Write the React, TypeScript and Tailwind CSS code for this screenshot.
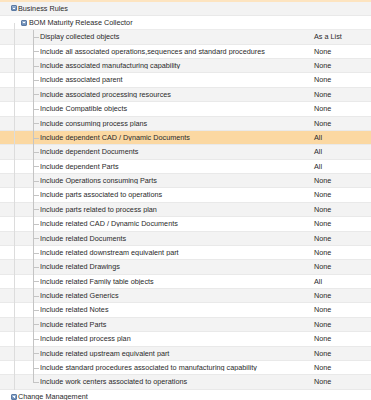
import React from "react";

type Item = { label: string; value: string; highlight?: boolean };

const items: Item[] = [
  { label: "Display collected objects", value: "As a List" },
  { label: "Include all associated operations,sequences and standard procedures", value: "None" },
  { label: "Include associated manufacturing capability", value: "None" },
  { label: "Include associated parent", value: "None" },
  { label: "Include associated processing resources", value: "None" },
  { label: "Include Compatible objects", value: "None" },
  { label: "Include consuming process plans", value: "None" },
  { label: "Include dependent CAD / Dynamic Documents", value: "All", highlight: true },
  { label: "Include dependent Documents", value: "All" },
  { label: "Include dependent Parts", value: "All" },
  { label: "Include Operations consuming Parts", value: "None" },
  { label: "Include parts associated to operations", value: "None" },
  { label: "Include parts related to process plan", value: "None" },
  { label: "Include related CAD / Dynamic Documents", value: "None" },
  { label: "Include related Documents", value: "None" },
  { label: "Include related downstream equivalent part", value: "None" },
  { label: "Include related Drawings", value: "None" },
  { label: "Include related Family table objects", value: "All" },
  { label: "Include related Generics", value: "None" },
  { label: "Include related Notes", value: "None" },
  { label: "Include related Parts", value: "None" },
  { label: "Include related process plan", value: "None" },
  { label: "Include related upstream equivalent part", value: "None" },
  { label: "Include standard procedures associated to manufacturing capability", value: "None" },
  { label: "Include work centers associated to operations", value: "None" },
];

function ToggleIcon({ plus }: { plus?: boolean }) {
  return (
    <span className="relative inline-block w-[6px] h-[6px] shrink-0 rounded-[1px] border border-[#5b7aa3] bg-gradient-to-b from-[#9db5d3] to-[#6a8bb6]">
      <span className="absolute left-[1px] top-[1.5px] w-[2px] h-[1px] bg-white" />
      {plus && <span className="absolute left-[1.5px] top-[1px] w-[1px] h-[2px] bg-white" />}
    </span>
  );
}

export default function App() {
  return (
    <div className="w-[371px] h-[400px] overflow-hidden bg-white font-['Liberation_Sans',Arial,sans-serif] text-[7.25px] text-[#2a2a2a] leading-none">
      <div className="h-[1.5px] bg-[#fde4c0]" />
      {/* Business Rules */}
      <div className="h-[14.375px] flex items-center bg-[#f3f3f3] border-b border-[#e9e9e9]">
        <div className="pl-[11px] flex items-center gap-[1px]">
          <ToggleIcon />
          <span>Business Rules</span>
        </div>
      </div>
      {/* BOM */}
      <div className="relative h-[14.375px] flex items-center bg-white border-b border-[#ececec]">
        <span className="absolute left-[14px] top-1/2 bottom-[-1px] w-[1px] bg-[#dcdcdc]" />
        <div className="pl-[21px] flex items-center gap-[2px]">
          <ToggleIcon />
          <span>BOM Maturity Release Collector</span>
        </div>
      </div>
      {items.map((it, i) => {
        const isLast = i === items.length - 1;
        const bg = it.highlight ? "bg-[#fbd8a2]" : i % 2 === 0 ? "bg-[#f3f3f3]" : "bg-white";
        return (
          <div key={i} className={`relative h-[14.375px] flex items-center border-b border-[#e9e9e9] ${bg}`}>
            <span className="absolute left-[14px] top-0 bottom-[-1px] w-[1px] bg-[#dcdcdc]" />
            <span
              className={`absolute left-[33px] top-0 w-[1px] bg-[#c4c4c4] ${isLast ? "h-1/2" : "bottom-[-1px]"}`}
            />
            <span className="absolute left-[33px] top-1/2 w-[6px] h-[1px] bg-[#c4c4c4]" />
            <span className="pl-[40px] flex-1 truncate">{it.label}</span>
            <span className="w-[57px] shrink-0">{it.value}</span>
          </div>
        );
      })}
      <div className="h-[14.375px] flex items-center bg-white">
        <div className="pl-[11px] flex items-center gap-[1px]">
          <ToggleIcon plus />
          <span>Change Management</span>
        </div>
      </div>
    </div>
  );
}
